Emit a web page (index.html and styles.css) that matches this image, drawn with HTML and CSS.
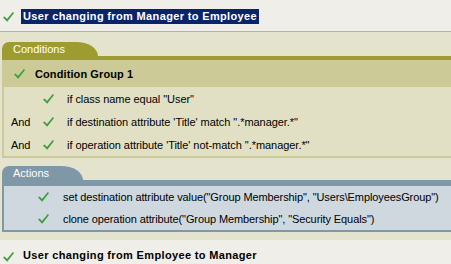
FILE: index.html
```html
<!DOCTYPE html>
<html lang="en">
<head>
    <meta charset="UTF-8">
    <title>Policy Rules</title>
    <link rel="stylesheet" href="styles.css">
</head>
<body>

<div class="rule-head">
    <svg class="check" viewBox="0 0 11 10"><path d="M0 5.5 L1.6 4.4 L4 7 L9.8 0 L11 0.9 L4.2 9.8 Z"/></svg>
    <span class="rule-title selected">User changing from Manager to Employee</span>
</div>

<div class="rule-body">
    <div class="section conditions">
        <div class="tab">Conditions</div>
        <div class="bar"></div>
        <div class="group-head">
            <svg class="check" viewBox="0 0 11 10"><path d="M0 5.5 L1.6 4.4 L4 7 L9.8 0 L11 0.9 L4.2 9.8 Z"/></svg>
            <span>Condition Group 1</span>
        </div>
        <div class="panel">
            <div class="row">
                <span class="op"></span>
                <svg class="check" viewBox="0 0 11 10"><path d="M0 5.5 L1.6 4.4 L4 7 L9.8 0 L11 0.9 L4.2 9.8 Z"/></svg>
                <span>if class name equal "User"</span>
            </div>
            <div class="row">
                <span class="op">And</span>
                <svg class="check" viewBox="0 0 11 10"><path d="M0 5.5 L1.6 4.4 L4 7 L9.8 0 L11 0.9 L4.2 9.8 Z"/></svg>
                <span>if destination attribute 'Title' match ".*manager.*"</span>
            </div>
            <div class="row">
                <span class="op">And</span>
                <svg class="check" viewBox="0 0 11 10"><path d="M0 5.5 L1.6 4.4 L4 7 L9.8 0 L11 0.9 L4.2 9.8 Z"/></svg>
                <span>if operation attribute 'Title' not-match ".*manager.*"</span>
            </div>
        </div>
    </div>

    <div class="section actions">
        <div class="tab">Actions</div>
        <div class="bar"></div>
        <div class="panel">
            <div class="row">
                <svg class="check" viewBox="0 0 11 10"><path d="M0 5.5 L1.6 4.4 L4 7 L9.8 0 L11 0.9 L4.2 9.8 Z"/></svg>
                <span>set destination attribute value("Group Membership", "Users\EmployeesGroup")</span>
            </div>
            <div class="row">
                <svg class="check" viewBox="0 0 11 10"><path d="M0 5.5 L1.6 4.4 L4 7 L9.8 0 L11 0.9 L4.2 9.8 Z"/></svg>
                <span>clone operation attribute("Group Membership", "Security Equals")</span>
            </div>
        </div>
    </div>
</div>

<div class="rule-head last">
    <svg class="check" viewBox="0 0 11 10"><path d="M0 5.5 L1.6 4.4 L4 7 L9.8 0 L11 0.9 L4.2 9.8 Z"/></svg>
    <span class="rule-title">User changing from Employee to Manager</span>
</div>

</body>
</html>
```

FILE: styles.css
```css
:root {
    --page-bg: #efeee9;
    --beige: #e4e3ce;
    --olive: #9d9c31;
    --olive-light: #cccb98;
    --olive-panel: #e1e0c4;
    --slate: #7f98a8;
    --slate-panel: #cfd8df;
    --check: #3c9f3c;
    --highlight: #0a246a;
}

body {
    margin: 0;
    background-color: var(--page-bg);
    font-family: 'Liberation Sans', Arial, sans-serif;
    font-size: 11px;
    color: #000;
    overflow: hidden;
}

.check {
    width: 11px;
    height: 10px;
    flex: none;
    fill: var(--check);
}

.rule-head {
    height: 31px;
    display: flex;
    align-items: center;
    padding-left: 3px;
    gap: 7px;
    border-bottom: 1px solid #b3b2aa;
}

.rule-head .check {
    margin-top: 3px;
}

.rule-head.last {
    height: 22px;
    border-bottom: none;
    border-top: 1px solid #e4e3d8;
    gap: 7px;
    padding-top: 4px;
}

.rule-title {
    font-weight: bold;
    letter-spacing: 0.35px;
    padding: 1px 2px 2px 2px;
    margin-top: 1px;
}

.rule-title.selected {
    background-color: var(--highlight);
    color: #fff;
}

.rule-body {
    background-color: var(--beige);
    padding: 10px 0 7px 2px;
}

.section {
    margin-bottom: 8px;
}

.section:last-child {
    margin-bottom: 0;
}

.tab {
    position: relative;
    display: inline-block;
    height: 14px;
    line-height: 15px;
    padding: 0 0 0 11px;
    color: #fff;
    border-top-left-radius: 7px;
}

.tab::after {
    content: '';
    position: absolute;
    top: 0;
    left: 100%;
    width: 22px;
    height: 100%;
    background-color: inherit;
    border-top-right-radius: 22px 14px;
}

.conditions .tab {
    width: 63px;
    background-color: var(--olive);
}

.actions .tab {
    width: 48px;
    background-color: var(--slate);
}

.bar {
    height: 4px;
}

.conditions .bar {
    background-color: var(--olive);
}

.actions .bar {
    height: 6px;
    background-color: var(--slate);
}

.group-head {
    height: 27px;
    display: flex;
    align-items: center;
    gap: 10px;
    padding-left: 12px;
    background-color: var(--olive-light);
    font-weight: bold;
    letter-spacing: 0.1px;
}

.panel {
    border-left: 2px solid var(--olive-light);
    border-bottom: 2px solid var(--olive-light);
    background-color: var(--olive-panel);
}

.actions .panel {
    border-color: var(--slate);
    background-color: var(--slate-panel);
}

.row {
    height: 23px;
    display: flex;
    align-items: center;
    white-space: nowrap;
    letter-spacing: -0.05px;
}

.conditions .row .check {
    margin-right: 13px;
}

.op {
    width: 39px;
    padding-left: 7px;
    box-sizing: border-box;
}

.actions .row {
    height: 22px;
    padding-left: 34px;
    gap: 14px;
    letter-spacing: -0.1px;
}
```
